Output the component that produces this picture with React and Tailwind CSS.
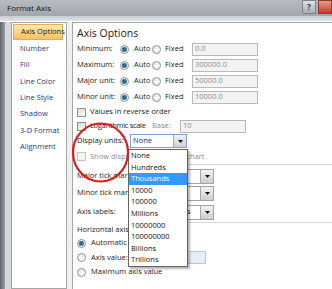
import React from 'react';

const FONT = "font-['Open_Sans','Noto_Sans',sans-serif]";

const Radio = ({ checked }) => (
  <span className="w-[9px] h-[9px] shrink-0 rounded-full border border-[#8e9194] bg-gradient-to-br from-[#e6e6e6] to-[#ffffff] flex items-center justify-center">
    {checked && <span className="w-[5px] h-[5px] rounded-full bg-gradient-to-br from-[#1d4e6e] to-[#3c89ad]" />}
  </span>
);

const Check = ({ disabled }) => (
  <span className={`w-[9px] h-[9px] shrink-0 border ${disabled ? 'border-[#c4c4c4] bg-[#f4f4f4]' : 'border-[#8e9194] bg-gradient-to-br from-[#dcdcdc] to-[#fbfbfb]'}`} />
);

const Arrow = () => (
  <span className="w-[13px] h-full shrink-0 border-l border-[#a8a8a8] bg-gradient-to-b from-[#f2f2f2] to-[#cfcfcf] flex items-center justify-center">
    <svg width="5" height="3" viewBox="0 0 5 3"><path d="M0 0h5L2.5 3z" fill="#111" /></svg>
  </span>
);

const Field = ({ value, w }) => (
  <span className={`${w} h-[13px] shrink-0 border border-[#b9b9b9] bg-[#f3f3f3] text-[#8d8d8d] pl-[2px] flex items-center`}>{value}</span>
);

const Combo = ({ text, w }) => (
  <span className={`${w} h-[15px] shrink-0 border border-[#a3a3a3] bg-white flex items-center`}>
    <span className="flex-1 pl-[2px] text-[#1b1b1b] overflow-hidden">{text}</span>
    <Arrow />
  </span>
);

const navItems = ['Axis Options', 'Number', 'Fill', 'Line Color', 'Line Style', 'Shadow', '3-D Format', 'Alignment'];

const units = ['None', 'Hundreds', 'Thousands', '10000', '100000', 'Millions', '10000000', '100000000', 'Billions', 'Trillions'];

const boundRows = [
  ['Minimum:', '0.0'],
  ['Maximum:', '300000.0'],
  ['Major unit:', '50000.0'],
  ['Minor unit:', '10000.0'],
];

export default function App() {
  return (
    <div className={`w-[332px] h-[289px] overflow-hidden relative flex flex-col bg-[#f0f0f0] text-[7.5px] leading-none whitespace-nowrap ${FONT}`}>
      {/* title bar */}
      <div className="h-[16px] shrink-0 flex bg-gradient-to-b from-[#b7bbc0] to-[#a2a7ac]">
        <span className="pl-[7px] pt-[4px] text-[8px] text-[#151515]">Format Axis</span>
        <div className="ml-auto flex h-[14px]">
          <span className="w-[14px] border border-[#7d8286] bg-gradient-to-b from-[#dfe2e5] to-[#a9aeb3] rounded-bl-[2px] flex items-center justify-center text-[8px] font-bold text-[#2b3b4c]">?</span>
          <span className="w-[14px] ml-[2px] border border-[#8a3b33] bg-gradient-to-b from-[#e89a8c] to-[#c2392b]" />
        </div>
      </div>
      <div className="h-[6px] shrink-0 bg-gradient-to-b from-[#c8ccd0] to-[#e2e4e6] border-b border-[#ffffff]" />
      <div className="flex flex-1 min-h-0">
        <div className="w-[5px] shrink-0 bg-gradient-to-r from-[#5f6367] to-[#9da1a5]" />
        <div className="w-[6px] shrink-0 bg-[#d6d9dc]" />
        {/* nav */}
        <div className="w-[56px] shrink-0 bg-white border border-[#a6a6a6] pt-[1px] pl-[1px]">
          {navItems.map((item, i) => (
            <div
              key={item}
              className={`h-[16.4px] flex items-center pl-[7px] ${i === 0 ? 'w-[50px] bg-gradient-to-b from-[#fee8ad] to-[#f8c15e] border border-[#e0ac56] text-[#1a1a1a]' : 'text-[#25398a]'}`}
            >
              {item}
            </div>
          ))}
        </div>
        <div className="w-[5px] shrink-0" />
        {/* content */}
        <div className="flex-1 bg-white border-l border-t border-[#a6a6a6] pl-[4px] text-[#1b1b1b]">
          <div className="h-[18px] flex items-center pt-[2px] text-[10.5px] text-[#1a1a1a]">Axis Options</div>
          {boundRows.map(([label, val]) => (
            <div key={label} className="h-[16px] flex items-center">
              <span className="w-[43px]">{label}</span>
              <Radio checked />
              <span className="w-[23px] pl-[5px]">Auto</span>
              <Radio />
              <span className="w-[31px] pl-[4px]">Fixed</span>
              <Field value={val} w="w-[66px]" />
            </div>
          ))}
          <div className="h-[14px] flex items-center">
            <Check />
            <span className="pl-[4px]">Values in reverse order</span>
          </div>
          <div className="h-[14px] flex items-center">
            <Check />
            <span className="w-[66px] pl-[4px] tracking-[-0.3px]">Logarithmic scale</span>
            <span className="w-[28px] text-[#8d8d8d]">Base:</span>
            <Field value="10" w="w-[66px]" />
          </div>
          <div className="h-[16px] flex items-center">
            <span className="w-[53px]">Display units:</span>
            <span className="w-[57px] h-[14px] shrink-0 border border-[#7ea0d2] bg-white flex items-center">
              <span className="flex-1 pl-[2px] text-[#1b2f6b]">None</span>
              <Arrow />
            </span>
          </div>
          <div className="h-[15px] flex items-center text-[#8d8d8d]">
            <Check disabled />
            <span className="pl-[4px]">Show display units label on chart</span>
          </div>
          <div className="ml-[53px] border-t border-[#d5d5d5]" />
          <div className="h-[19px] pt-[3px] flex items-center">
            <span className="w-[75px]">Major tick mark type:</span>
            <Combo text="Outside" w="w-[62px]" />
          </div>
          <div className="h-[18px] flex items-center">
            <span className="w-[75px]">Minor tick mark type:</span>
            <Combo text="None" w="w-[62px]" />
          </div>
          <div className="h-[20px] flex items-center">
            <span className="w-[69px]">Axis labels:</span>
            <Combo text="Next to Axis" w="w-[68px]" />
          </div>
          <div className="ml-[53px] border-t border-[#d5d5d5]" />
          <div className="h-[13px] flex items-center">Horizontal axis crosses:</div>
          <div className="h-[14px] flex items-center">
            <Radio checked />
            <span className="pl-[5px]">Automatic</span>
          </div>
          <div className="h-[15px] flex items-center">
            <Radio />
            <span className="w-[69px] pl-[5px]">Axis value:</span>
            <span className="w-[51px] h-[13px] border border-[#b9c7dc] bg-[#e6edf8]" />
          </div>
          <div className="h-[14px] flex items-center">
            <Radio />
            <span className="pl-[5px]">Maximum axis value</span>
          </div>
        </div>
      </div>

      {/* open dropdown list */}
      <div className="absolute left-[128px] top-[149px] w-[60px] bg-white border border-[#646464] shadow-[2px_2px_2px_rgba(0,0,0,0.3)] text-[#111]">
        {units.map(u => (
          <div key={u} className={`h-[11.6px] flex items-center pl-[2px] ${u === 'Thousands' ? 'bg-[#3399ff] text-white' : ''}`}>{u}</div>
        ))}
      </div>

      {/* red annotation circle */}
      <svg className="absolute left-[70px] top-[120px]" width="62" height="66" viewBox="0 0 62 66">
        <ellipse cx="30.5" cy="32.5" rx="27.5" ry="29" fill="none" stroke="#e01b1b" strokeWidth="2.2" />
      </svg>
    </div>
  );
}
